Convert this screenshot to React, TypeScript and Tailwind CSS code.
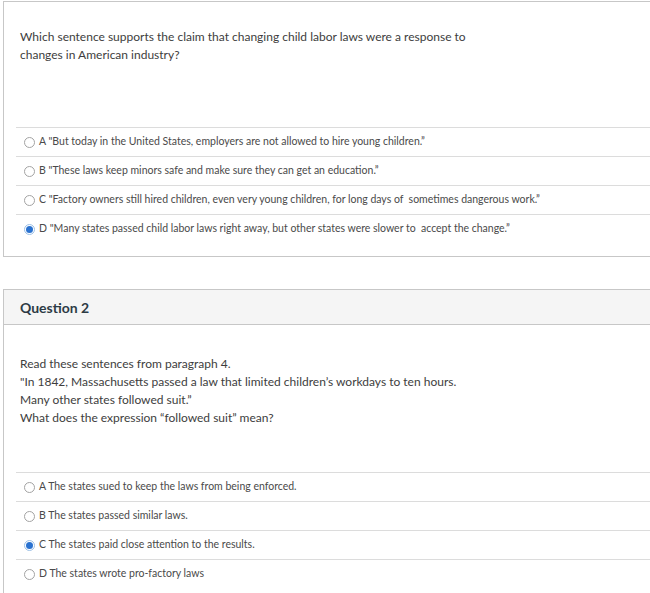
import React from 'react';

type Option = { letter: string; text: string; checked?: boolean };

const q1Options: Option[] = [
  { letter: 'A', text: '"But today in the United States, employers are not allowed to hire young children.”' },
  { letter: 'B', text: '"These laws keep minors safe and make sure they can get an education.”' },
  { letter: 'C', text: '"Factory owners still hired children, even very young children, for long days of  sometimes dangerous work.”' },
  { letter: 'D', text: '"Many states passed child labor laws right away, but other states were slower to  accept the change.”', checked: true },
];

const q2Options: Option[] = [
  { letter: 'A', text: 'The states sued to keep the laws from being enforced.' },
  { letter: 'B', text: 'The states passed similar laws.' },
  { letter: 'C', text: 'The states paid close attention to the results.', checked: true },
  { letter: 'D', text: 'The states wrote pro-factory laws' },
];

const Radio = ({ checked }: { checked?: boolean }) =>
  checked ? (
    <span className="w-[11px] h-[11px] rounded-full border border-[#9cc0e6] bg-white flex items-center justify-center shrink-0">
      <span className="w-[7px] h-[7px] rounded-full bg-[#2a72d0]" />
    </span>
  ) : (
    <span className="w-[11px] h-[11px] rounded-full border border-[#a3a3a3] bg-white shrink-0" />
  );

const OptionList = ({ options }: { options: Option[] }) => (
  <div className="ml-[12px]">
    {options.map((o) => (
      <div key={o.letter} className="h-[29px] border-t border-[#dcdcdc] flex items-center pl-[8px] gap-[4px]">
        <Radio checked={o.checked} />
        <span className="text-[10.5px] text-[#4a4a4a] whitespace-pre">
          {o.letter} {o.text}
        </span>
      </div>
    ))}
  </div>
);

export default function App() {
  return (
    <div className="w-[650px] h-[593px] overflow-hidden bg-white" style={{ fontFamily: 'Lato, "Open Sans", sans-serif' }}>
      <div className="ml-[3px] mt-[1px] w-[700px] border border-[#c7c7c7] pb-[13px]">
        <div className="pl-[16px] pt-[26px] h-[125px] text-[12px] leading-[18px] text-[#3d3d3d]">
          Which sentence supports the claim that changing child labor laws were a response to
          <br />
          changes in American industry?
        </div>
        <OptionList options={q1Options} />
      </div>

      <div className="ml-[3px] mt-[32px] w-[700px] border border-[#c7c7c7] pb-[13px]">
        <div className="h-[35px] bg-[#f5f5f5] border-b border-[#c7c7c7] flex items-center pl-[16px] text-[14px] font-bold text-[#2d3b45]">
          Question 2
        </div>
        <div className="pl-[16px] pt-[30px] h-[147px] text-[12px] leading-[18px] text-[#3d3d3d]">
          Read these sentences from paragraph 4.
          <br />
          "In 1842, Massachusetts passed a law that limited children’s workdays to ten hours.
          <br />
          Many other states followed suit.”
          <br />
          What does the expression “followed suit” mean?
        </div>
        <OptionList options={q2Options} />
      </div>
    </div>
  );
}
